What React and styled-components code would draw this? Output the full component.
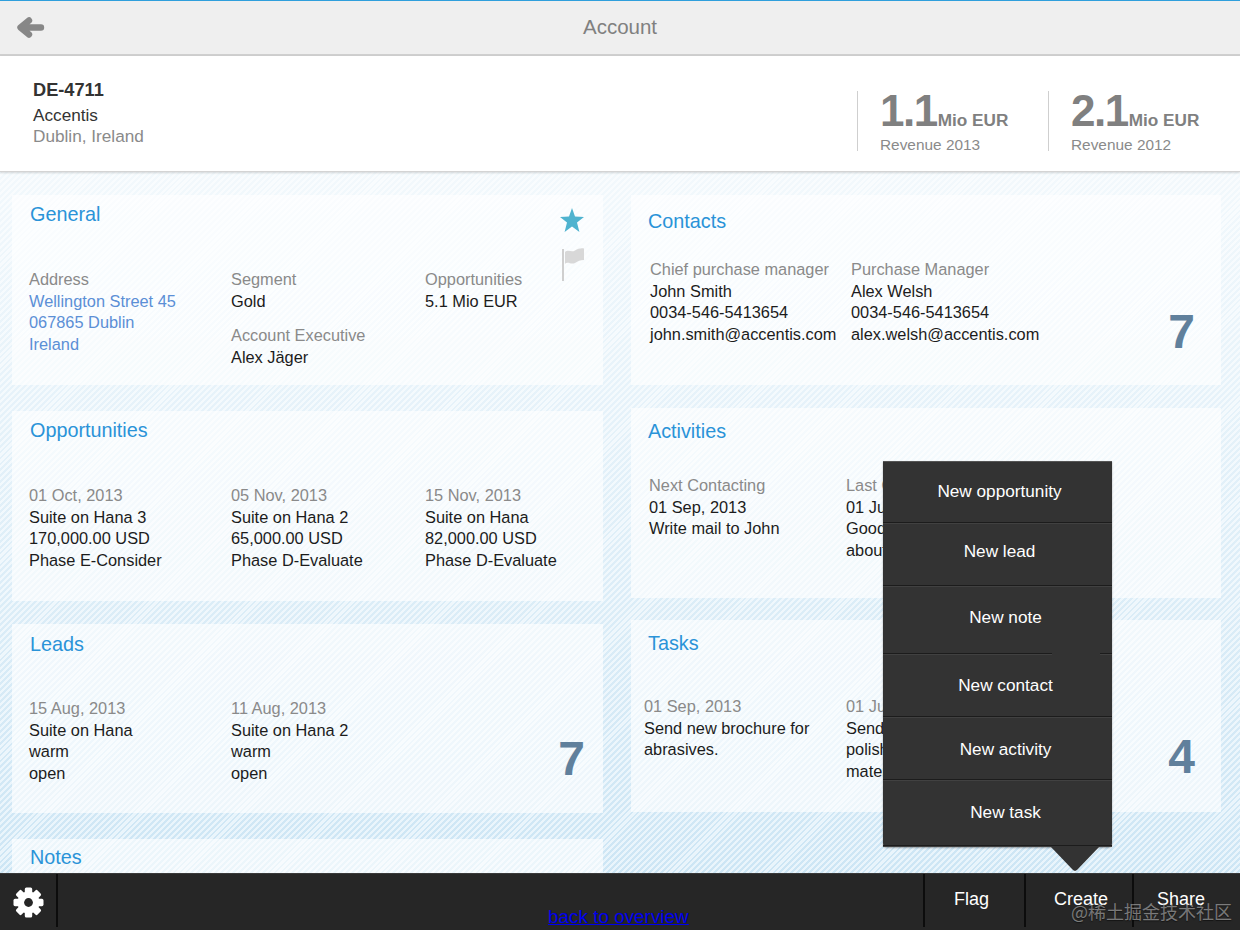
import React from "react";
import styled, { createGlobalStyle } from "styled-components";

const GlobalStyle = createGlobalStyle`
  html, body {
    margin: 0;
    padding: 0;
    background: #fff;
    font-family: "Liberation Sans", Arial, sans-serif;
  }
`;

const Page = styled.div`
  position: relative;
  width: 1240px;
  height: 930px;
  display: flex;
  flex-direction: column;
  overflow: hidden;
`;

const TopBar = styled.header`
  flex: none;
  height: 53px;
  display: flex;
  align-items: center;
  justify-content: center;
  position: relative;
  background: #efefef;
  border-top: 1px solid #2f9fdc;
  border-bottom: 2px solid #cfcfcf;
  color: #808080;
  font-size: 20.5px;
`;

const TopTitle = styled.span`
  margin-bottom: 2px;
`;

const BackButton = styled.span`
  position: absolute;
  left: 0;
  top: 0;
  display: flex;
`;

const Summary = styled.section`
  flex: none;
  height: 116px;
  box-sizing: border-box;
  padding: 23px 33px 0;
  display: flex;
  justify-content: space-between;
  background: #fff;
  border-bottom: 1px solid #d4d4d4;
  box-shadow: 0 1px 2px rgba(0, 0, 0, 0.15);
  position: relative;
  z-index: 1;
`;

const AccountId = styled.div`
  font-size: 18.2px;
  font-weight: bold;
  line-height: 22px;
  color: #333;
`;

const AccountName = styled.div`
  margin-top: 4px;
  font-size: 17.2px;
  line-height: 21px;
  color: #333;
`;

const AccountPlace = styled.div`
  font-size: 17.2px;
  line-height: 21px;
  color: #8a8a8a;
`;

const Kpis = styled.div`
  display: flex;
  margin-top: 12px;
`;

const Kpi = styled.div`
  width: ${(p) => p.$width}px;
  height: 60px;
  padding-left: 22px;
  border-left: 1px solid #cfcfcf;
`;

const KpiValue = styled.div`
  display: flex;
  align-items: baseline;
  height: 40px;
  color: #808080;
  font-weight: bold;
  font-size: 44px;
  letter-spacing: -1.5px;
  line-height: 40px;
  white-space: nowrap;
`;

const KpiUnit = styled.span`
  margin-left: 1px;
  font-size: 17.2px;
  letter-spacing: 0;
  line-height: 18px;
`;

const KpiLabel = styled.div`
  margin-top: 5px;
  font-size: 15.4px;
  line-height: 18px;
  color: #8a8a8a;
`;

const Content = styled.main`
  flex: 1;
  min-height: 0;
  overflow: hidden;
  display: grid;
  grid-template-columns: 591px 590px;
  column-gap: 28px;
  padding: 23px 0 0 12px;
  background:
    linear-gradient(to bottom, rgba(255, 255, 255, 0.78), rgba(255, 255, 255, 0.12) 100%),
    repeating-linear-gradient(135deg, #c6e2f3 0 2px, #e6f3fb 2px 4.2px);
`;

const Column = styled.div`
  display: flex;
  flex-direction: column;
`;

const Card = styled.section`
  position: relative;
  flex: none;
  box-sizing: border-box;
  height: ${(p) => p.$height}px;
  margin-bottom: ${(p) => p.$after || 0}px;
  padding: ${(p) => p.$top}px 0 0 17px;
  background: rgba(255, 255, 255, 0.62);
`;

const CardTitle = styled.h2`
  margin: 0;
  padding-left: ${(p) => p.$indent || 0}px;
  font-size: 19.8px;
  font-weight: normal;
  line-height: 24px;
  color: #2a93d8;
`;

const Fields = styled.div`
  display: grid;
  grid-template-columns: ${(p) => p.$cols};
  margin-top: ${(p) => p.$gap}px;
  margin-left: ${(p) => p.$shift || 0}px;
  font-size: 16.35px;
  line-height: 21.6px;
  color: #1c1c1c;
  white-space: nowrap;
`;

const Label = styled.div`
  color: #8a8a8a;
`;

const AddressLink = styled.div`
  color: #5b8fd6;
`;

const FieldStack = styled.div`
  margin-top: ${(p) => (p.$spaced ? 13 : 0)}px;
`;

const BigCount = styled.div`
  position: absolute;
  right: ${(p) => p.$right}px;
  bottom: ${(p) => p.$bottom}px;
  font-size: 48px;
  line-height: 48px;
  font-weight: bold;
  color: #60809c;
`;

const CardMarks = styled.div`
  position: absolute;
  top: 13px;
  right: 18px;
  display: flex;
  flex-direction: column;
  gap: 16px;
  align-items: flex-end;
`;

const Footer = styled.footer`
  flex: none;
  height: 57px;
  box-sizing: border-box;
  display: flex;
  background: #262626;
  border-top: 1px solid #3a3a3a;
`;

const FooterCell = styled.div`
  flex: none;
  box-sizing: border-box;
  width: ${(p) => p.$width}px;
  height: 53px;
  display: flex;
  align-items: center;
  justify-content: center;
  color: #fff;
  font-size: 18px;
  padding: 0 ${(p) => p.$padRight || 0}px 3px ${(p) => p.$padLeft || 0}px;
  border-left: 2px solid #0c0c0c;
`;

const GearCell = styled.div`
  flex: none;
  width: 56px;
  height: 56px;
  display: flex;
  align-items: center;
  justify-content: center;
`;

const GearRule = styled.div`
  flex: none;
  width: 2px;
  height: 53px;
  background: #0c0c0c;
`;

const FooterSpacer = styled.div`
  flex: 1;
`;

const OverviewLink = styled.a`
  position: absolute;
  left: 548px;
  top: 905px;
  font-family: "Liberation Sans", Arial, sans-serif;
  font-size: 18.9px;
  line-height: 24px;
  color: #0000ee;
  text-decoration: underline;
`;

const Watermark = styled.div`
  position: absolute;
  right: 8px;
  bottom: 8px;
  font-family: "Noto Sans CJK SC", "Liberation Sans", sans-serif;
  font-size: 18px;
  line-height: 22px;
  color: rgba(255, 255, 255, 0.42);
  text-shadow: 0 1px 1px rgba(0, 0, 0, 0.5);
`;

const Menu = styled.nav`
  position: absolute;
  left: 883px;
  top: 461px;
  width: 229px;
  background: #333;
  border-top: 1px solid #555;
  border-radius: 0 0 4px 4px;
  box-shadow: 0 1px 2px rgba(0, 0, 0, 0.35);
  z-index: 3;
`;

const MenuItem = styled.div`
  box-sizing: border-box;
  height: ${(p) => p.$height}px;
  padding-left: ${(p) => p.$shift}px;
  padding-bottom: ${(p) => p.$lift}px;
  display: flex;
  align-items: center;
  justify-content: center;
  color: #fff;
  font-size: 17.2px;
  border-bottom: 1px solid #414141;
  box-shadow: inset 0 -1px 0 #1c1c1c;
  &:last-of-type {
    border-bottom: 0;
    box-shadow: none;
  }
`;

const MenuNotch = styled.div`
  position: absolute;
  left: 169px;
  top: 191px;
  width: 48px;
  height: 3px;
  background: #333;
`;

const MenuArrow = styled.div`
  position: absolute;
  left: 167px;
  bottom: -24px;
  width: 50px;
  height: 25px;
  background: #333;
  clip-path: polygon(0 0, 100% 0, 54% 96%, 50% 100%, 46% 96%);
`;

function BackArrow() {
  return (
    <svg width="60" height="53" viewBox="0 0 60 53">
      <path
        d="M41 26.5H21M29 19.5L20.5 26.5L29 33.5"
        fill="none"
        stroke="#878787"
        strokeWidth="6.4"
        strokeLinecap="round"
        strokeLinejoin="round"
      />
    </svg>
  );
}

function Star() {
  return (
    <svg width="25" height="24" viewBox="0 0 25 24">
      <polygon
        fill="#4fb3cf"
        points="12,0 15,8.6 24,9 17,14.6 19.4,24 12,18.6 4.6,24 7,14.6 0,9 9,8.6"
      />
    </svg>
  );
}

function Flag() {
  return (
    <svg width="24" height="33" viewBox="0 0 24 33">
      <rect x="1" y="1" width="2" height="32" fill="#cfcfcf" />
      <path
        d="M4 4 C8 1 10 5 14 2.5 C17 0.5 20 0 23 0.5 V12 C19 12 17 13 14 15 C10 17 7 13 4 16 Z"
        fill="#d8d8d8"
      />
    </svg>
  );
}

function Gear() {
  const teeth = [0, 45, 90, 135];
  return (
    <svg width="31" height="31" viewBox="0 0 31 31">
      <g fill="#fff">
        <circle cx="15.5" cy="15.5" r="11" />
        {teeth.map((deg) => (
          <rect
            key={deg}
            x="11.8"
            y="0.5"
            width="7.4"
            height="30"
            rx="1.6"
            transform={`rotate(${deg} 15.5 15.5)`}
          />
        ))}
      </g>
      <circle cx="15.5" cy="15.5" r="4.4" fill="#262626" />
    </svg>
  );
}

function Field({ label, lines, spaced }) {
  return (
    <FieldStack $spaced={spaced}>
      <Label>{label}</Label>
      {lines.map((line) => (
        <div key={line}>{line}</div>
      ))}
    </FieldStack>
  );
}

const MENU_ITEMS = [
  { text: "New opportunity", height: 62, shift: 4, lift: 3 },
  { text: "New lead", height: 63, shift: 4, lift: 7 },
  { text: "New note", height: 68, shift: 16, lift: 6 },
  { text: "New contact", height: 63, shift: 16, lift: 1 },
  { text: "New activity", height: 63, shift: 16, lift: 0 },
  { text: "New task", height: 66, shift: 16, lift: 2 },
];

export default function App() {
  return (
    <Page>
      <GlobalStyle />
      <TopBar>
        <BackButton>
          <BackArrow />
        </BackButton>
        <TopTitle>Account</TopTitle>
      </TopBar>

      <Summary>
        <div>
          <AccountId>DE-4711</AccountId>
          <AccountName>Accentis</AccountName>
          <AccountPlace>Dublin, Ireland</AccountPlace>
        </div>
        <Kpis>
          <Kpi $width={168}>
            <KpiValue>
              1.1<KpiUnit>Mio EUR</KpiUnit>
            </KpiValue>
            <KpiLabel>Revenue 2013</KpiLabel>
          </Kpi>
          <Kpi $width={136}>
            <KpiValue>
              2.1<KpiUnit>Mio EUR</KpiUnit>
            </KpiValue>
            <KpiLabel>Revenue 2012</KpiLabel>
          </Kpi>
        </Kpis>
      </Summary>

      <Content>
        <Column>
          <Card $height={190} $after={26} $top={7}>
            <CardTitle $indent={1}>General</CardTitle>
            <Fields $gap={43} $cols="202px 194px 1fr">
              <div>
                <Label>Address</Label>
                <AddressLink>Wellington Street 45</AddressLink>
                <AddressLink>067865 Dublin</AddressLink>
                <AddressLink>Ireland</AddressLink>
              </div>
              <div>
                <Field label="Segment" lines={["Gold"]} />
                <Field spaced label="Account Executive" lines={["Alex Jäger"]} />
              </div>
              <Field label="Opportunities" lines={["5.1 Mio EUR"]} />
            </Fields>
            <CardMarks>
              <Star />
              <Flag />
            </CardMarks>
          </Card>
          <Card $height={190} $after={23} $top={7}>
            <CardTitle $indent={1}>Opportunities</CardTitle>
            <Fields $gap={43} $cols="202px 194px 1fr">
              <Field label="01 Oct, 2013" lines={["Suite on Hana 3", "170,000.00 USD", "Phase E-Consider"]} />
              <Field label="05 Nov, 2013" lines={["Suite on Hana 2", "65,000.00 USD", "Phase D-Evaluate"]} />
              <Field label="15 Nov, 2013" lines={["Suite on Hana", "82,000.00 USD", "Phase D-Evaluate"]} />
            </Fields>
          </Card>
          <Card $height={189} $after={26} $top={8}>
            <CardTitle $indent={1}>Leads</CardTitle>
            <Fields $gap={42} $cols="202px 194px 1fr">
              <Field label="15 Aug, 2013" lines={["Suite on Hana", "warm", "open"]} />
              <Field label="11 Aug, 2013" lines={["Suite on Hana 2", "warm", "open"]} />
            </Fields>
            <BigCount $right={18} $bottom={30}>7</BigCount>
          </Card>
          <Card $height={120} $top={6}>
            <CardTitle $indent={1}>Notes</CardTitle>
          </Card>
        </Column>

        <Column>
          <Card $height={190} $after={23} $top={14}>
            <CardTitle>Contacts</CardTitle>
            <Fields $gap={26} $shift={2} $cols="201px 1fr">
              <Field
                label="Chief purchase manager"
                lines={["John Smith", "0034-546-5413654", "john.smith@accentis.com"]}
              />
              <Field
                label="Purchase Manager"
                lines={["Alex Welsh", "0034-546-5413654", "alex.welsh@accentis.com"]}
              />
            </Fields>
            <BigCount $right={26} $bottom={29}>7</BigCount>
          </Card>
          <Card $height={190} $after={22} $top={11}>
            <CardTitle>Activities</CardTitle>
            <Fields $gap={32} $shift={1} $cols="197px 1fr">
              <Field label="Next Contacting" lines={["01 Sep, 2013", "Write mail to John"]} />
              <Field label="Last Contact" lines={["01 Jul, 2013", "Good discussion", "about"]} />
            </Fields>
          </Card>
          <Card $height={192} $top={11}>
            <CardTitle>Tasks</CardTitle>
            <Fields $gap={41} $shift={-4} $cols="202px 1fr">
              <Field label="01 Sep, 2013" lines={["Send new brochure for", "abrasives."]} />
              <Field label="01 Jul, 2013" lines={["Send", "polish", "material"]} />
            </Fields>
            <BigCount $right={26} $bottom={31}>4</BigCount>
          </Card>
        </Column>
      </Content>

      <Footer>
        <GearCell>
          <Gear />
        </GearCell>
        <GearRule />
        <FooterSpacer />
        <FooterCell $width={101} $padRight={6}>Flag</FooterCell>
        <FooterCell $width={108} $padLeft={4}>Create</FooterCell>
        <FooterCell $width={108} $padRight={12}>Share</FooterCell>
      </Footer>

      <OverviewLink href="#overview">back to overview</OverviewLink>

      <Menu>
        {MENU_ITEMS.map((item) => (
          <MenuItem key={item.text} $height={item.height} $shift={item.shift} $lift={item.lift}>
            {item.text}
          </MenuItem>
        ))}
        <MenuNotch />
        <MenuArrow />
      </Menu>

      <Watermark>@稀土掘金技术社区</Watermark>
    </Page>
  );
}
